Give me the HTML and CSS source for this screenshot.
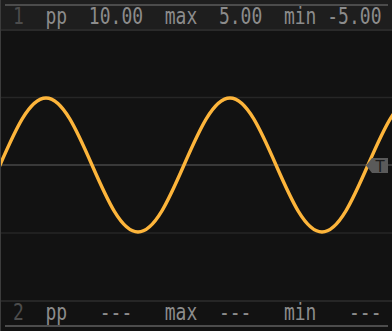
FILE: index.html
```html
<!DOCTYPE html>
<html lang="en">
<head>
    <meta charset="UTF-8">
    <meta name="viewport" content="width=device-width, initial-scale=1.0">
    <title>Scope</title>
    <link rel="stylesheet" href="styles.css">
</head>
<body>
    <div class="scope">
        <div class="head">
            <div class="rule"></div>
            <div class="readout"><span class="ch">1</span>  pp  10.00  max  5.00  min -5.00</div>
        </div>
        <div class="plot">
            <svg width="391" height="269" viewBox="1 31 391 269">
                <line class="grid" x1="0" y1="97.5" x2="392" y2="97.5"/>
                <line class="grid mid" x1="0" y1="165" x2="392" y2="165"/>
                <line class="grid" x1="0" y1="233" x2="392" y2="233"/>
                <path class="wave" d="M -46 232
                    c 16.65,0 31,-32.68 46,-67
                    c 15,-34.32 29.35,-67 46,-67
                    c 16.65,0 31,32.68 46,67
                    c 15,34.32 29.35,67 46,67
                    c 16.65,0 31,-32.68 46,-67
                    c 15,-34.32 29.35,-67 46,-67
                    c 16.65,0 31,32.68 46,67
                    c 15,34.32 29.35,67 46,67
                    c 16.65,0 31,-32.68 46,-67
                    c 15,-34.32 29.35,-67 46,-67"/>
                <polygon class="marker" points="366,165.5 372,158 388,158 388,173 372,173"/>
                <text class="marker-text" x="380" y="171.5">T</text>
            </svg>
        </div>
        <div class="foot">
            <div class="readout"><span class="ch">2</span>  pp   ---   max  ---   min   ---</div>
            <div class="rule"></div>
        </div>
    </div>
</body>
</html>
```

FILE: styles.css
```css
body {
    margin: 0;
    padding: 0;
    background-color: #121212;
}
.scope {
    width: 392px;
    height: 331px;
    box-sizing: border-box;
    border-left: 1px solid #3c3c3c;
    display: flex;
    flex-direction: column;
    background-color: #121212;
}
.head {
    height: 29px;
    background-color: #1e1e1e;
    border-bottom: 2px solid #2a2a2a;
}
.rule {
    height: 2px;
    margin: 0 4px 0 4px;
    background-color: #4c4c4c;
}
.head .rule {
    margin-top: 4px;
}
.readout {
    height: 23px;
    line-height: 23px;
    padding-left: 12px;
    font-family: "DejaVu Sans Mono", monospace;
    font-size: 18px;
    color: #8c8c8c;
    white-space: pre;
    transform: scaleY(1.28);
    transform-origin: 0 17.7px;
}
.ch {
    color: #4c4c4c;
}
.plot {
    height: 269px;
}
.plot svg {
    display: block;
}
.grid {
    stroke: #262626;
    stroke-width: 1.6;
}
.grid.mid {
    stroke: #393939;
    stroke-width: 2;
}
.wave {
    fill: none;
    stroke: #fdb53b;
    stroke-width: 3.4;
}
.marker {
    fill: #5a5a5a;
}
.marker-text {
    font-family: "DejaVu Sans", sans-serif;
    font-size: 15px;
    fill: #1c1c1c;
    text-anchor: middle;
}
.foot {
    height: 29px;
    border-top: 2px solid #262626;
}
.foot .rule {
    margin-top: 0;
}
```
